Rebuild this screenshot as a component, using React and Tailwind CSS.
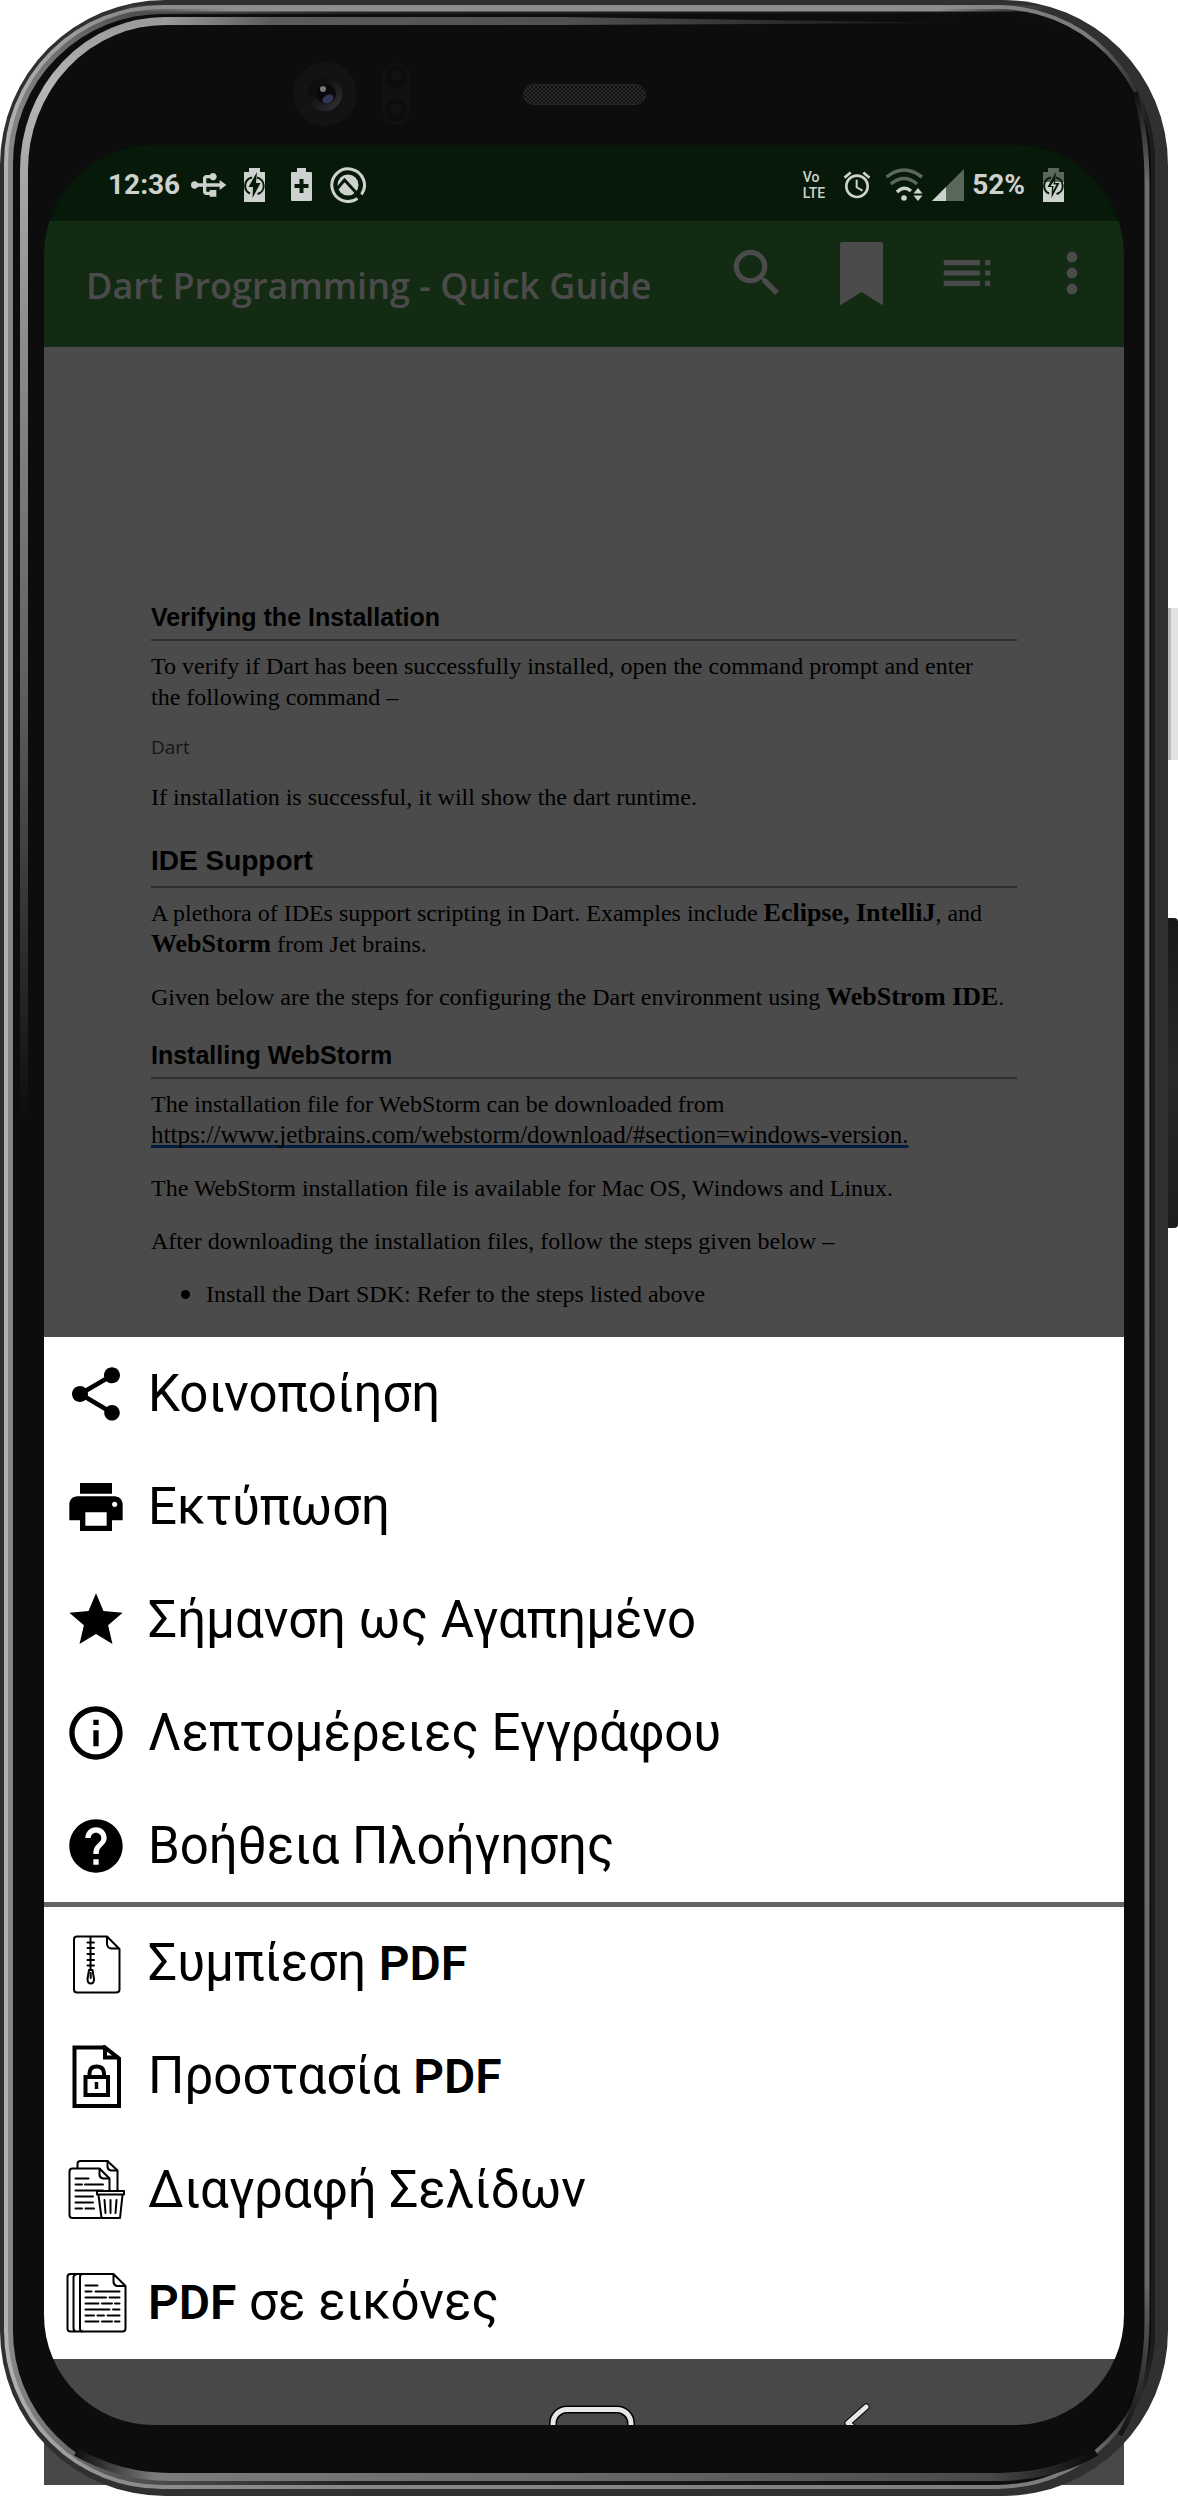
import React from "react";
import {
  MdAlarm,
  MdHelp,
  MdInfoOutline,
  MdMoreVert,
  MdPrint,
  MdSearch,
  MdShare,
  MdStar,
  MdToc,
  MdUsb,
} from "react-icons/md";

/* ---------- Phone shell ---------- */

function ShellHighlights() {
  return (
    <svg
      className="absolute inset-0 h-full w-full"
      viewBox="0 0 1168 2496"
      preserveAspectRatio="none"
      fill="none"
      aria-hidden="true"
    >
      <defs>
        <linearGradient id="rim" gradientUnits="userSpaceOnUse" x1="0" y1="0" x2="1168" y2="0">
          <stop offset="0" stopColor="#b4b4b4" />
          <stop offset="0.1" stopColor="#8c8c8c" />
          <stop offset="0.93" stopColor="#7c7c7c" />
          <stop offset="0.985" stopColor="#1c1c1c" />
        </linearGradient>
        <linearGradient id="glow" gradientUnits="userSpaceOnUse" x1="0" y1="0" x2="1168" y2="0">
          <stop offset="0" stopColor="#8a8a8a" />
          <stop offset="0.1" stopColor="#555555" />
          <stop offset="0.3" stopColor="#222222" />
          <stop offset="1" stopColor="#0a0a0b" />
        </linearGradient>
        <linearGradient id="rimTop" gradientUnits="userSpaceOnUse" x1="120" y1="0" x2="1050" y2="0">
          <stop offset="0" stopColor="#8e8e8e" stopOpacity="0" />
          <stop offset="0.12" stopColor="#8e8e8e" />
          <stop offset="0.88" stopColor="#8e8e8e" />
          <stop offset="1" stopColor="#8e8e8e" stopOpacity="0" />
        </linearGradient>
        <linearGradient id="stripTop" gradientUnits="userSpaceOnUse" x1="165" y1="0" x2="970" y2="0">
          <stop offset="0" stopColor="#9a9a9a" />
          <stop offset="0.13" stopColor="#5c5c5c" />
          <stop offset="0.5" stopColor="#505050" />
          <stop offset="1" stopColor="#0d0d0e" />
        </linearGradient>
        <linearGradient id="stripLeft" gradientUnits="userSpaceOnUse" x1="0" y1="20" x2="0" y2="1120">
          <stop offset="0" stopColor="#9a9a9a" />
          <stop offset="0.06" stopColor="#b6b6b6" />
          <stop offset="0.3" stopColor="#8a8a8a" />
          <stop offset="0.6" stopColor="#606060" />
          <stop offset="1" stopColor="#0d0d0e" />
        </linearGradient>
        <linearGradient id="stripBottom" gradientUnits="userSpaceOnUse" x1="75" y1="0" x2="1090" y2="0">
          <stop offset="0" stopColor="#0d0d0e" />
          <stop offset="0.08" stopColor="#7c7c7c" />
          <stop offset="0.5" stopColor="#686868" />
          <stop offset="0.9" stopColor="#4a4a4a" />
          <stop offset="1" stopColor="#0d0d0e" />
        </linearGradient>
        <linearGradient id="stripRight" gradientUnits="userSpaceOnUse" x1="0" y1="90" x2="0" y2="2445">
          <stop offset="0" stopColor="#0d0d0e" />
          <stop offset="0.04" stopColor="#6e6e6e" />
          <stop offset="0.93" stopColor="#6a6a6a" />
          <stop offset="1" stopColor="#0d0d0e" />
        </linearGradient>
      </defs>
      <rect x="4" y="5" width="1151" height="2484" rx="158" fill="#0d0d0e" />
      <rect x="9" y="10" width="1141" height="2474" rx="153" stroke="url(#glow)" strokeWidth="8" />
      <rect x="6" y="7" width="1147" height="2480" rx="156" stroke="url(#rim)" strokeWidth="4" />
      <path d="M120 8.500 H1050" stroke="url(#rimTop)" strokeWidth="6" />
      <path d="M24 1120 V170 A141 149 0 0 1 165 21" stroke="url(#stripLeft)" strokeWidth="8" />
      <path d="M165 17 H560 L970 23 L560 25 H165 Z" fill="url(#stripTop)" />
      <path d="M76 2452 Q120 2477 170 2477 H1000 Q1060 2475 1096 2452" stroke="url(#stripBottom)" strokeWidth="8" />
      <path d="M1135 92 Q1147 130 1147 185 V2320 Q1147 2390 1120 2435" stroke="url(#stripRight)" strokeWidth="5" />
    </svg>
  );
}

function Camera() {
  return (
    <svg className="h-16 w-16" viewBox="0 0 64 64" aria-hidden="true">
      <defs>
        <linearGradient id="lens" x1="0" y1="0" x2="1" y2="1">
          <stop offset="0.3" stopColor="#0e0e0f" />
          <stop offset="1" stopColor="#34343a" />
        </linearGradient>
      </defs>
      <circle cx="32" cy="32" r="32" fill="#131313" />
      <circle cx="32" cy="32" r="17" fill="url(#lens)" />
      <circle cx="33" cy="32" r="10" fill="#0a0a0d" />
      <ellipse cx="35" cy="37" rx="6" ry="4" fill="#2f3656" transform="rotate(-30 35 37)" />
      <circle cx="30" cy="27" r="3" fill="#77777a" />
    </svg>
  );
}

function Sensor() {
  return (
    <svg className="h-[62px] w-7" viewBox="0 0 28 62" aria-hidden="true">
      <rect width="28" height="62" rx="14" fill="#111111" />
      <circle cx="14" cy="14" r="11" fill="#0d0d0d" />
      <circle cx="15" cy="12" r="5" fill="#121212" />
      <circle cx="14" cy="47" r="11" fill="#0d0d0d" />
      <circle cx="14" cy="46" r="5" fill="#121212" />
    </svg>
  );
}

function Speaker() {
  return (
    <svg className="h-[21px] w-[123px]" viewBox="0 0 123 21" aria-hidden="true">
      <defs>
        <pattern id="mesh" width="4" height="4" patternUnits="userSpaceOnUse">
          <rect width="4" height="4" fill="#121212" />
          <rect width="2" height="2" fill="#2a2a2a" />
          <rect x="2" y="2" width="2" height="2" fill="#2a2a2a" />
        </pattern>
      </defs>
      <rect x="0.5" y="0.5" width="122" height="20" rx="10" fill="url(#mesh)" stroke="#262626" />
    </svg>
  );
}

/* ---------- Status bar ---------- */

function BatteryCharging({ level }) {
  return (
    <svg className="h-[34px] w-[21px]" viewBox="0 0 21 34" aria-hidden="true">
      <path d="M5 0H16V4H21V34H0V4H5Z" fill={level ? "#5a675b" : "#ced2ce"} />
      {level ? <path d="M0 14H21V34H0Z" fill="#ced2ce" /> : null}
      <path
        d="M8 9.500A8.500 8.500 0 0 0 6 25.500M13 9.500A8.500 8.500 0 0 1 13.500 26"
        fill="none"
        stroke="#071a0a"
        strokeWidth="2"
      />
      <path d="M13 4L4.500 19H9L8.500 30L16.500 15H12Z" fill="#071a0a" />
      {level ? <path d="M11 13L7.500 18H10.500L10 23L13.500 16.500H10.500Z" fill="#ced2ce" /> : null}
    </svg>
  );
}

function BatterySaver() {
  return (
    <svg className="h-[34px] w-[21px]" viewBox="0 0 21 34" aria-hidden="true">
      <path d="M6 0H15V4H20Q21 4 21 5V32Q21 33 20 33H1Q0 33 0 32V5Q0 4 1 4H6Z" fill="#ced2ce" />
      <path d="M8.500 11H12.500V16H17.500V20H12.500V25H8.500V20H3.500V16H8.500Z" fill="#071a0a" />
    </svg>
  );
}

function BadgeIcon() {
  return (
    <svg className="size-9" viewBox="0 0 36 36" fill="none" aria-hidden="true">
      <path d="M27.500 31.500A16.300 16.300 0 1 1 31.500 27.500" stroke="#ced2ce" strokeWidth="3" />
      <circle cx="18" cy="18" r="10.500" fill="#ced2ce" />
      <path d="M6.500 22.500L14.500 13L32 32" stroke="#071a0a" strokeWidth="3" />
    </svg>
  );
}

function WifiIcon() {
  return (
    <svg className="h-[34px] w-[39px]" viewBox="0 0 39 34" fill="none" aria-hidden="true">
      <path d="M1.500 9Q19 -5 37 9" stroke="#5a675b" strokeWidth="3.500" />
      <path d="M6 16Q19 5 32 16" stroke="#5a675b" strokeWidth="3.500" />
      <path d="M12 24Q19 17 26 23" stroke="#ced2ce" strokeWidth="3.500" />
      <circle cx="19" cy="30" r="2.800" fill="#ced2ce" />
      <path d="M33 20L37.500 25.500H28.500ZM33 33L37.500 27.500H28.500Z" fill="#ced2ce" />
    </svg>
  );
}

function SignalIcon() {
  return (
    <svg className="h-8 w-8" viewBox="0 0 32 32" aria-hidden="true">
      <path d="M32 0V32H0Z" fill="#5a675b" />
      <path d="M14 18V32H0Z" fill="#ced2ce" />
    </svg>
  );
}

function StatusBar() {
  return (
    <div className="flex h-[76px] items-center justify-between bg-[#071a0a] pt-1 pr-[60px] pl-[64px] font-['Roboto',sans-serif] text-[#ced2ce]">
      <div className="flex items-center">
        <span className="text-[28px] leading-8 font-bold">12:36</span>
        <MdUsb className="ml-2 size-10 rotate-90" aria-hidden="true" />
        <span className="ml-4"><BatteryCharging /></span>
        <span className="ml-[26px]"><BatterySaver /></span>
        <span className="ml-[18px]"><BadgeIcon /></span>
      </div>
      <div className="flex items-center">
        <span className="flex flex-col text-[14px] leading-4 font-medium">
          <span>Vo</span>
          <span>LTE</span>
        </span>
        <MdAlarm className="ml-4 size-8" aria-hidden="true" />
        <span className="ml-3"><WifiIcon /></span>
        <span className="ml-2"><SignalIcon /></span>
        <span className="ml-2 text-[28px] leading-8 font-bold">52%</span>
        <span className="ml-[18px]"><BatteryCharging level /></span>
      </div>
    </div>
  );
}

/* ---------- App bar ---------- */

function BookmarkIcon() {
  return (
    <svg className="h-[63px] w-[43px]" viewBox="0 0 43 63" fill="currentColor" aria-hidden="true">
      <path d="M2 0H41Q43 0 43 2V62Q43 63.500 41.500 62.500L21.500 50L1.500 62.500Q0 63.500 0 62V2Q0 0 2 0Z" />
    </svg>
  );
}

function BarButton({ label, children }) {
  return (
    <button type="button" aria-label={label} className="flex h-[104px] w-[105px] items-center justify-center">
      {children}
    </button>
  );
}

function AppBar() {
  return (
    <header className="flex h-[126px] items-start bg-[#132b13] pl-[42px] text-[#4b4b4b]">
      <h1 className="flex-1 self-center pt-1 font-['Open_Sans',sans-serif] text-[36px] leading-[48px] font-semibold whitespace-nowrap">
        Dart Programming - Quick Guide
      </h1>
      <BarButton label="Search"><MdSearch className="size-[62px]" /></BarButton>
      <BarButton label="Bookmark"><BookmarkIcon /></BarButton>
      <BarButton label="Contents"><MdToc className="size-[62px]" /></BarButton>
      <BarButton label="More"><MdMoreVert className="size-[64px]" /></BarButton>
    </header>
  );
}

/* ---------- Document ---------- */

const subheading =
  "border-b-2 border-[#2e2e2e] pb-[6px] font-['Liberation_Sans',sans-serif] text-[25px] leading-8 font-bold";

const Strong = ({ children }) => <b className="text-[26px] leading-none">{children}</b>;

function Document() {
  return (
    <main className="bg-[#4b4b4b] px-[107px] pt-[254px] pb-[27px] font-['Liberation_Serif',serif] text-[24px] leading-[31px] text-black">
      <h3 className={subheading}>Verifying the Installation</h3>
      <p className="mt-[10px] whitespace-nowrap">
        To verify if Dart has been successfully installed, open the command prompt and enter
        <br />
        the following command –
      </p>
      <p className="mt-[22px] font-['Open_Sans',sans-serif] text-[19px] leading-[25px] text-[#161616]">Dart</p>
      <p className="mt-[22px]">If installation is successful, it will show the dart runtime.</p>
      <h2 className="mt-8 border-b-2 border-[#2e2e2e] pb-[9px] font-['Liberation_Sans',sans-serif] text-[28px] leading-8 font-bold">
        IDE Support
      </h2>
      <p className="mt-[10px] whitespace-nowrap">
        A plethora of IDEs support scripting in Dart. Examples include <Strong>Eclipse, IntelliJ</Strong>, and
        <br />
        <Strong>WebStorm</Strong> from Jet brains.
      </p>
      <p className="mt-[22px] whitespace-nowrap">
        Given below are the steps for configuring the Dart environment using <Strong>WebStrom IDE</Strong>.
      </p>
      <h3 className={`mt-[26px] ${subheading}`}>Installing WebStorm</h3>
      <p className="mt-[10px]">
        The installation file for WebStorm can be downloaded from
        <br />
        <a
          href="https://www.jetbrains.com/webstorm/download/#section=windows-version"
          className="text-[25px] leading-none underline decoration-[#001d3d] decoration-3 underline-offset-2 [text-decoration-skip-ink:none]"
        >
          https://www.jetbrains.com/webstorm/download/#section=windows-version.
        </a>
      </p>
      <p className="mt-[22px]">The WebStorm installation file is available for Mac OS, Windows and Linux.</p>
      <p className="mt-[22px]">After downloading the installation files, follow the steps given below –</p>
      <ul className="mt-[22px] pl-[30px]">
        <li className="flex items-center gap-4">
          <span className="size-[9px] rounded-full bg-black" aria-hidden="true" />
          Install the Dart SDK: Refer to the steps listed above
        </li>
      </ul>
    </main>
  );
}

/* ---------- Menu sheet ---------- */

const line = {
  className: "size-16",
  viewBox: "0 0 64 64",
  fill: "none",
  stroke: "currentColor",
  strokeLinecap: "round",
  strokeLinejoin: "round",
  "aria-hidden": true,
};

function ZipPageIcon() {
  return (
    <svg {...line} strokeWidth="2">
      <path d="M43 4.500H13Q10 4.500 10 7.500V57.500Q10 60.500 13 60.500H52Q55.500 60.500 55.500 57.500V17L43 4.500V12Q43.500 16 47 16.500H55" />
      <path d="M26.500 5V38M23.500 10.500H30M23.500 16H30M23.500 22H30M23.500 28H30M23.500 33.500H30" />
      <path d="M25 38H28.500L30 47Q30 51.500 26.800 51.500Q23.500 51.500 23.500 47ZM26.700 41V46" />
    </svg>
  );
}

function LockedPageIcon() {
  return (
    <svg {...line} strokeWidth="4" strokeLinecap="butt" strokeLinejoin="miter">
      <path d="M41 2.500H10.500V61H55V13.500L41 2.500V12.500H55" />
      <path d="M21.500 32H44V50H21.500Z" />
      <path d="M25.500 31V28Q26 21.500 32.500 21.500Q39.500 21.500 40 28V31" />
      <path d="M32.500 37V44" strokeWidth="3.500" />
    </svg>
  );
}

function DeletePagesIcon() {
  return (
    <svg {...line} strokeWidth="2">
      <path d="M13.500 10V6Q13.500 3 16.500 3H43.500L53.500 12.500V32" />
      <path d="M43.500 3V9Q44 12 47 12.500H53" />
      <path d="M36 60H8.500Q5.500 60 5.500 57V13.500Q5.500 10.500 8.500 10.500H35.500L45.500 20.500V32" />
      <path d="M35.500 11V17Q36 20 39 20.500H45" />
      <path d="M11.500 20.500H24.500M11.500 26.500H18M21 26.500H39M11.500 32.500H39M11.500 38.500H29M11.500 44.500H29M11.500 50.500H18M21.500 50.500H30" />
      <path d="M33 33H60V36.500H33ZM34.500 37L37.500 60H56L58.500 37" />
      <path d="M40.500 42L41.500 55M46.500 42V55M52.500 42L51.500 55" />
    </svg>
  );
}

function PageStackIcon() {
  return (
    <svg {...line} strokeWidth="2">
      <path d="M49.500 3H18.500Q16 3 16 6V57.500Q16 60.500 18.500 60.500H58.500Q61.500 60.500 61.500 57.500V15L49.500 3V11Q50 14.500 53 15H61" />
      <path d="M18.500 3H6.500Q3.500 3 3.500 6V57.500Q3.500 60.500 6.500 60.500H18.500M12 3.500Q9.500 4 9.500 6.500V57Q9.500 60 12 60.500" />
      <path d="M21.500 14.500H33.500M21.500 20.500H27.500M31.500 20.500H55.500M21.500 26.500H42M45.500 26.500H55.500M21.500 32.500H34.500M38 32.500H48M51 32.500H55.500M21.500 38.500H45.500M49 38.500H55.500M21.500 44.500H30M33.500 44.500H40M43.500 44.500H55.500M21.500 50.500H34.500M38 50.500H48M51 50.500H55.500" />
    </svg>
  );
}

const Latin = ({ children }) => <span className="text-[48px] font-semibold">{children}</span>;

function MenuItem({ icon, children }) {
  return (
    <li>
      <button type="button" className="flex h-[113px] w-full items-center gap-5 px-5 text-left">
        {icon}
        <span>{children}</span>
      </button>
    </li>
  );
}

function MenuSheet() {
  return (
    <section className="bg-white font-['Roboto',sans-serif] text-[51px] leading-[56px] text-black">
      <ul>
        <MenuItem icon={<MdShare className="size-16" />}>Κοινοποίηση</MenuItem>
        <MenuItem icon={<MdPrint className="size-16" />}>Εκτύπωση</MenuItem>
        <MenuItem icon={<MdStar className="size-16" />}>Σήμανση ως Αγαπημένο</MenuItem>
        <MenuItem icon={<MdInfoOutline className="size-16" />}>Λεπτομέρειες Εγγράφου</MenuItem>
        <MenuItem icon={<MdHelp className="size-16" />}>Βοήθεια Πλοήγησης</MenuItem>
      </ul>
      <ul className="border-t-[5px] border-[#646464]">
        <MenuItem icon={<ZipPageIcon />}>Συμπίεση <Latin>PDF</Latin></MenuItem>
        <MenuItem icon={<LockedPageIcon />}>Προστασία <Latin>PDF</Latin></MenuItem>
        <MenuItem icon={<DeletePagesIcon />}>Διαγραφή Σελίδων</MenuItem>
        <MenuItem icon={<PageStackIcon />}><Latin>PDF</Latin> σε εικόνες</MenuItem>
      </ul>
    </section>
  );
}

/* ---------- System navigation ---------- */

function SystemNav() {
  return (
    <nav className="flex h-[66px] items-end justify-between bg-[#484848] pr-[240px] pl-[505px]">
      <button type="button" aria-label="Home">
        <svg className="block h-5 w-[86px]" viewBox="0 0 86 20" fill="none" aria-hidden="true">
          <rect x="4" y="4.500" width="78" height="50" rx="14" stroke="#000000" strokeWidth="8" />
          <rect x="4" y="4.500" width="78" height="50" rx="14" stroke="#e6e6e6" strokeWidth="5" />
        </svg>
      </button>
      <button type="button" aria-label="Back">
        <svg className="block h-[22px] w-[40px]" viewBox="0 0 40 22" fill="none" strokeLinecap="round" strokeLinejoin="round" aria-hidden="true">
          <path d="M22 4L4 20L22 36" stroke="#000000" strokeWidth="7" />
          <path d="M22 4L4 20L22 36" stroke="#e6e6e6" strokeWidth="5" />
        </svg>
      </button>
    </nav>
  );
}

export default function App() {
  return (
    <div className="bg-white">
      <div className="relative isolate pr-[10px]">
        <div className="absolute top-[608px] right-0 -z-10 h-[152px] w-[11px] border-l-4 border-[#bcbcbc] bg-[#e2e2e2]" />
        <div className="absolute top-[918px] right-0 -z-10 h-[310px] w-5 rounded-sm bg-linear-to-b from-[#181818] via-[#2a2826] to-[#1c1c1c]" />
        <div className="absolute right-[54px] bottom-[11px] left-[44px] -z-10 h-40 bg-[#484848]" />

        <div className="relative overflow-hidden rounded-[165px] bg-[#303030]">
          <ShellHighlights />
          <div className="relative px-[44px] pb-[71px]">
            <div className="grid h-[145px] grid-cols-[1fr_auto_1fr] items-center pt-[43px]">
              <div className="flex items-center justify-end gap-[25px] pr-[113px]">
                <Camera />
                <Sensor />
              </div>
              <Speaker />
            </div>
            <div className="overflow-hidden rounded-[110px]">
              <StatusBar />
              <AppBar />
              <Document />
              <MenuSheet />
              <SystemNav />
            </div>
          </div>
        </div>
      </div>
    </div>
  );
}
